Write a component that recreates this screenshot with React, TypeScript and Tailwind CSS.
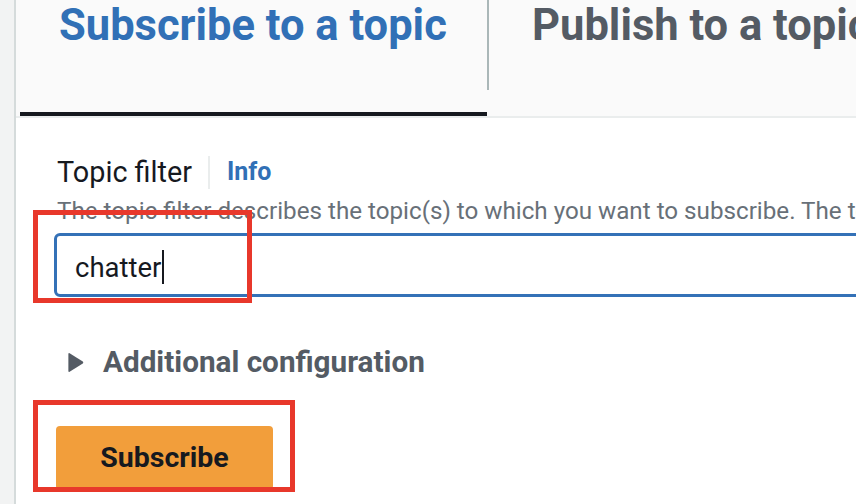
import React from "react";

export default function App() {
  return (
    <div className="relative flex h-[504px] w-[856px] overflow-hidden bg-white font-['Roboto',sans-serif]">
      {/* left strip */}
      <div className="h-full w-[16px] shrink-0 border-r-2 border-[#d5dbdb] bg-[#f2f3f3]" />

      <div className="flex min-w-0 flex-1 flex-col">
        {/* tabs header */}
        <div className="flex h-[116px] shrink-0 bg-[#fafafa]">
          <div className="ml-[4px] flex h-full w-[467px] shrink-0 border-b-4 border-[#16191f] pl-[39px] pt-[1px]">
            <span className="whitespace-nowrap text-[43.5px] font-bold leading-[50px] text-[#3170b6]">
              Subscribe to a topic
            </span>
          </div>
          <div className="h-[90px] w-[2px] shrink-0 bg-[#aab7b8]" />
          <div className="flex h-full shrink-0 pl-[43px] pt-[1px]">
            <span className="whitespace-nowrap text-[43.5px] font-bold leading-[50px] text-[#545b64]">
              Publish to a topic
            </span>
          </div>
        </div>
        <div className="h-[2px] shrink-0 bg-[#eaeded]" />

        {/* content */}
        <div className="flex flex-col pl-[38px] pt-[36px]">
          <div className="flex items-center pl-[3px]">
            <span className="whitespace-nowrap text-[28.8px] leading-[36px] text-[#16191f]">Topic filter</span>
            <div className="ml-[16px] h-[33px] w-[2px] bg-[#eaeded]" />
            <span className="ml-[17px] whitespace-nowrap text-[25px] font-bold leading-[36px] text-[#3170b6]">Info</span>
          </div>
          <div className="mt-[6px] whitespace-nowrap pl-[3px] text-[24.2px] leading-[30px] text-[#687078]">
            The topic filter describes the topic(s) to which you want to subscribe. The topic filter can include MQTT wildcard characters.
          </div>
          <div className="mt-[7px] flex h-[64px] w-[860px] shrink-0 rounded-[6px] border-[3px] border-[#3471b7] bg-white pl-[18px] pt-[16px]">
            <span className="whitespace-nowrap text-[27.5px] leading-[32px] text-[#16191f]">chatter</span>
            <span className="ml-[1px] mt-[-2px] h-[34px] w-[2px] bg-[#16191f]" />
          </div>

          <div className="ml-[14px] mt-[47px] flex items-center">
            <svg width="16" height="21" viewBox="0 0 16 21" className="shrink-0">
              <path d="M1.6 1.2 L14.8 9.6 Q15.8 10.5 14.8 11.4 L1.6 19.8 Q0.4 20.4 0.4 19 L0.4 2 Q0.4 0.6 1.6 1.2 Z" fill="#545b64" />
            </svg>
            <span className="ml-[19px] whitespace-nowrap text-[29.7px] font-bold leading-[36px] text-[#545b64]">
              Additional configuration
            </span>
          </div>

          <div className="ml-[2px] mt-[46px] flex h-[64px] w-[217px] shrink-0 justify-center rounded-[4px] bg-[#f29e3b] pt-[15px]">
            <span className="whitespace-nowrap text-[28.5px] font-bold leading-[34px] text-[#16191f]">Subscribe</span>
          </div>
        </div>
      </div>

      {/* annotation boxes */}
      <div className="pointer-events-none absolute left-[33px] top-[210px] h-[93px] w-[219px] border-[5px] border-[#e8382b]" />
      <div className="pointer-events-none absolute left-[33px] top-[400px] h-[92px] w-[262px] border-[5px] border-[#e8382b]" />
    </div>
  );
}
